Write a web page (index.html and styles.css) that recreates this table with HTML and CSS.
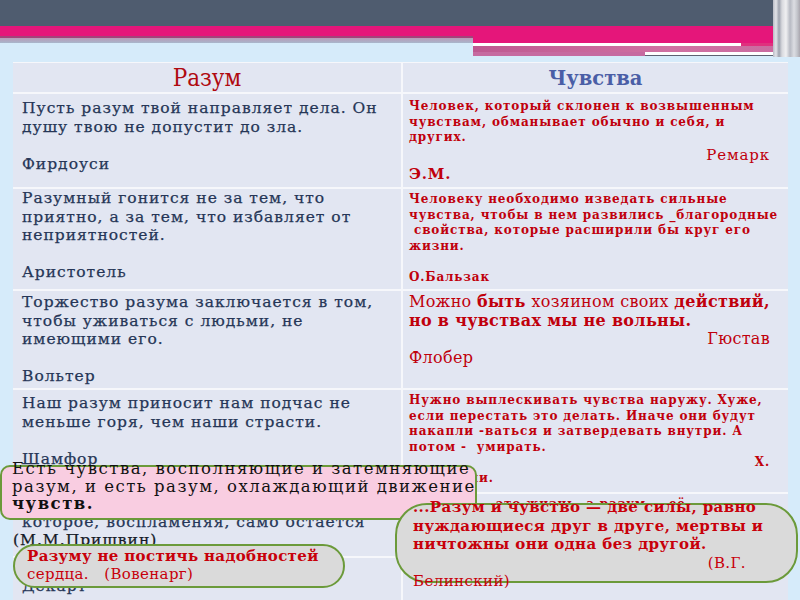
FILE: index.html
```html
<!DOCTYPE html>
<html lang="ru">
<head>
<meta charset="utf-8">
<title>Разум и чувства</title>
<link rel="stylesheet" href="styles.css">
</head>
<body>
<div class="slide">
  <div class="deco">
    <div class="bar-dark"></div>
    <div class="bands">
      <div class="band-left">
        <div class="pink-a"></div>
        <div class="mauve-a"></div>
        <div class="grey-a"></div>
      </div>
      <div class="band-right">
        <div class="pink-b"></div>
        <div class="strip"><div class="white-1"></div><div class="pink-c"></div></div>
        <div class="mauve-b"></div>
        <div class="strip"><div class="mauve-c"></div><div class="white-2"></div></div>
        <div class="strip thin"><div class="mauve-c"></div><div class="dark-2"></div></div>
      </div>
    </div>
    <div class="pillars"></div>
  </div>

  <div class="table">
    <div class="cell head head-l">Разум</div>
    <div class="cell head head-r">Чувства</div>

    <div class="cell left p5">Пусть разум твой направляет дела. Он<br>душу твою не допустит до зла.<br><br>Фирдоуси</div>
    <div class="cell right p5">Человек, который склонен к возвышенным<br>чувствам, обманывает обычно и себя, и<br>других.
      <div class="author"><div class="ar">Ремарк</div><div class="b">Э.М.</div></div>
    </div>

    <div class="cell left p0">Разумный гонится не за тем, что<br>приятно, а за тем, что избавляет от<br>неприятностей.<br><br>Аристотель</div>
    <div class="cell right p3">Человеку необходимо изведать сильные<br>чувства, чтобы в нем развились _благородные<br>&nbsp;свойства, которые расширили бы круг его<br>жизни.<br><br>О.Бальзак</div>

    <div class="cell left p2">Торжество разума заключается в том,<br>чтобы уживаться с людьми, не<br>имеющими его.<br><br>Вольтер</div>
    <div class="cell right big p2"><span class="n">Можно </span>быть <span class="n">хозяином своих </span>действий,<br>но в чувствах мы не вольны.<div class="ar n">Гюстав</div><div class="n">Флобер</div></div>

    <div class="cell left p4">Наш разум приносит нам подчас не<br>меньше горя, чем наши страсти.<br><br>Шамфор</div>
    <div class="cell right p3">Нужно выплескивать чувства наружу. Хуже,<br>если перестать это делать. Иначе они будут<br>накапли -ваться и затвердевать внутри. А<br>потом -&nbsp; умирать.<div class="ar">Х.</div>Мураками.</div>

    <div class="cell left p0">Разум — это огонь, холодный огонь,<br>которое, воспламеняя, само остается<br><span class="dark">(М.М.Пришвин)</span></div>
    <div class="cell right span2 p3">Чувство — это жизнь, а разум — её<br>рулевой.</div>

    <div class="cell left p0">Я мыслю, значит существую.<br>Декарт</div>
  </div>

  <div class="note note-pink">
    <div class="note-text">Есть чувства, восполняющие и затемняющие<br>разум, и есть разум, охлаждающий движение<br><b>чувств.</b></div>
  </div>
  <div class="note note-small">
    <div class="note-text"><b>Разуму не постичь надобностей</b><br>сердца.&nbsp;&nbsp; (Вовенарг)</div>
  </div>
  <div class="note note-big">
    <div class="note-text">...Разум и чувство — две силы, равно<br>нуждающиеся друг в друге, мертвы и<br>ничтожны они одна без другой.<div class="ar n">(В.Г.</div><span class="n">Белинский)</span></div>
  </div>
</div>
</body>
</html>
```

FILE: styles.css
```css
html, body {
  margin: 0;
  padding: 0;
}
body {
  width: 800px;
  height: 600px;
  overflow: hidden;
  background: #d6ebfa;
  font-family: "DejaVu Serif", serif;
}
.slide {
  position: relative;
  width: 800px;
  height: 600px;
  overflow: hidden;
  background: #d6ebfa;
}

/* top decoration */
.deco {
  position: relative;
  height: 55px;
}
.bar-dark {
  height: 26px;
  background: #4f5c6f;
}
.bands {
  display: flex;
  align-items: flex-start;
}
.band-left {
  width: 473px;
}
.pink-a { height: 10px; background: #e5167a; }
.mauve-a { height: 2px; background: #a4427a; }
.grey-a { height: 5px; background: linear-gradient(#b99bb8, #a9b6cb); }
.band-right {
  flex: 1;
}
.pink-b { height: 17px; background: #e5167a; }
.strip { display: flex; height: 3px; }
.strip.thin { height: 1px; }
.white-1 { width: 268px; background: #ffffff; }
.pink-c { flex: 1; background: #e0307e; }
.mauve-b { height: 6px; background: linear-gradient(90deg, #be5890, #d071a2 60%, #c96aa0); }
.mauve-c { width: 172px; background: #c66aa0; }
.white-2 { flex: 1; background: #ffffff; }
.dark-2 { flex: 1; background: #5d6272; }
.pillars {
  position: absolute;
  top: 0;
  right: 0;
  width: 27px;
  height: 57px;
  background: linear-gradient(90deg, #b9bcc6 0, #e2e3e8 3px, #9da2ae 6px, #d8d9de 9px, #f0f0f2 13px, #b7bac3 17px, #dcdde2 21px, #c5c7cd 24px, #a9a6ae 27px);
}

/* table */
.table {
  margin: 7px 0 0 13px;
  width: 775px;
  display: grid;
  grid-template-columns: 388px 1fr;
  grid-template-rows: 29px 93px 100px 97px 102px 62px auto;
  gap: 2px;
  background: #f6f7fb;
  border-top: 1px solid #f6f7fb;
  height: 560px;
}
.cell {
  background: #e2e6f2;
  white-space: nowrap;
  overflow: hidden;
}
.head {
  display: flex;
  align-items: center;
  justify-content: center;
}
.head-l {
  color: #b00a10;
  font-size: 24px;
  font-family: "DejaVu Serif Condensed", "DejaVu Serif", serif;
  font-stretch: condensed;
  padding-top: 1px;
}
.head-r {
  color: #4a5ea6;
  font-weight: bold;
  font-size: 19.5px;
  padding-top: 2px;
}

.left {
  color: #263657;
  font-size: 15.5px;
  line-height: 18.5px;
  padding-left: 9px;
  letter-spacing: 1px;
  -webkit-text-stroke: 0.25px #263657;
}
.right {
  color: #c0000c;
  font-size: 12px;
  line-height: 15.5px;
  font-weight: bold;
  padding-left: 6px;
  padding-right: 18px;
  letter-spacing: 0.85px;
}
.right.big {
  font-size: 16px;
  line-height: 18.5px;
  letter-spacing: 0.3px;
}
.n { font-weight: normal; }
.author {
  font-size: 15px;
  line-height: 19px;
  font-weight: normal;
}
.author .b { font-weight: bold; }
.ar { text-align: right; }
.dark {
  display: inline-block;
  margin-left: -9px;
  color: #151a28;
  -webkit-text-stroke: 0.25px #151a28;
}
.span2 { grid-row: span 2; }

.p0 { padding-top: 0; }
.p2 { padding-top: 2px; }
.p3 { padding-top: 3px; }
.p4 { padding-top: 4px; }
.p5 { padding-top: 5px; }

/* overlay notes */
.note {
  position: absolute;
  box-sizing: border-box;
  border: 2px solid #6b9a3a;
  background: #dadada;
  white-space: nowrap;
}
.note-text {
  font-size: 15px;
}
.note-pink {
  left: 0;
  top: 465px;
  width: 477px;
  height: 55px;
  border-radius: 10px;
  background: #f9cde1;
}
.note-pink .note-text {
  color: #111111;
  font-size: 16.5px;
  line-height: 17.7px;
  margin: -7px 0 0 10px;
  letter-spacing: 1.5px;
}
.note-small {
  left: 13px;
  top: 544px;
  width: 332px;
  height: 44px;
  border-radius: 22px;
}
.note-small .note-text {
  color: #c8000a;
  line-height: 18px;
  margin: 1px 0 0 12px;
  letter-spacing: 0.35px;
}
.note-small b { font-weight: bold; }
.note-big {
  left: 395px;
  top: 503px;
  width: 403px;
  height: 80px;
  border-radius: 32px;
}
.note-big .note-text {
  color: #c8000a;
  font-weight: bold;
  line-height: 18.5px;
  margin: -7px 50px 0 16px;
  letter-spacing: 0.4px;
}
```
